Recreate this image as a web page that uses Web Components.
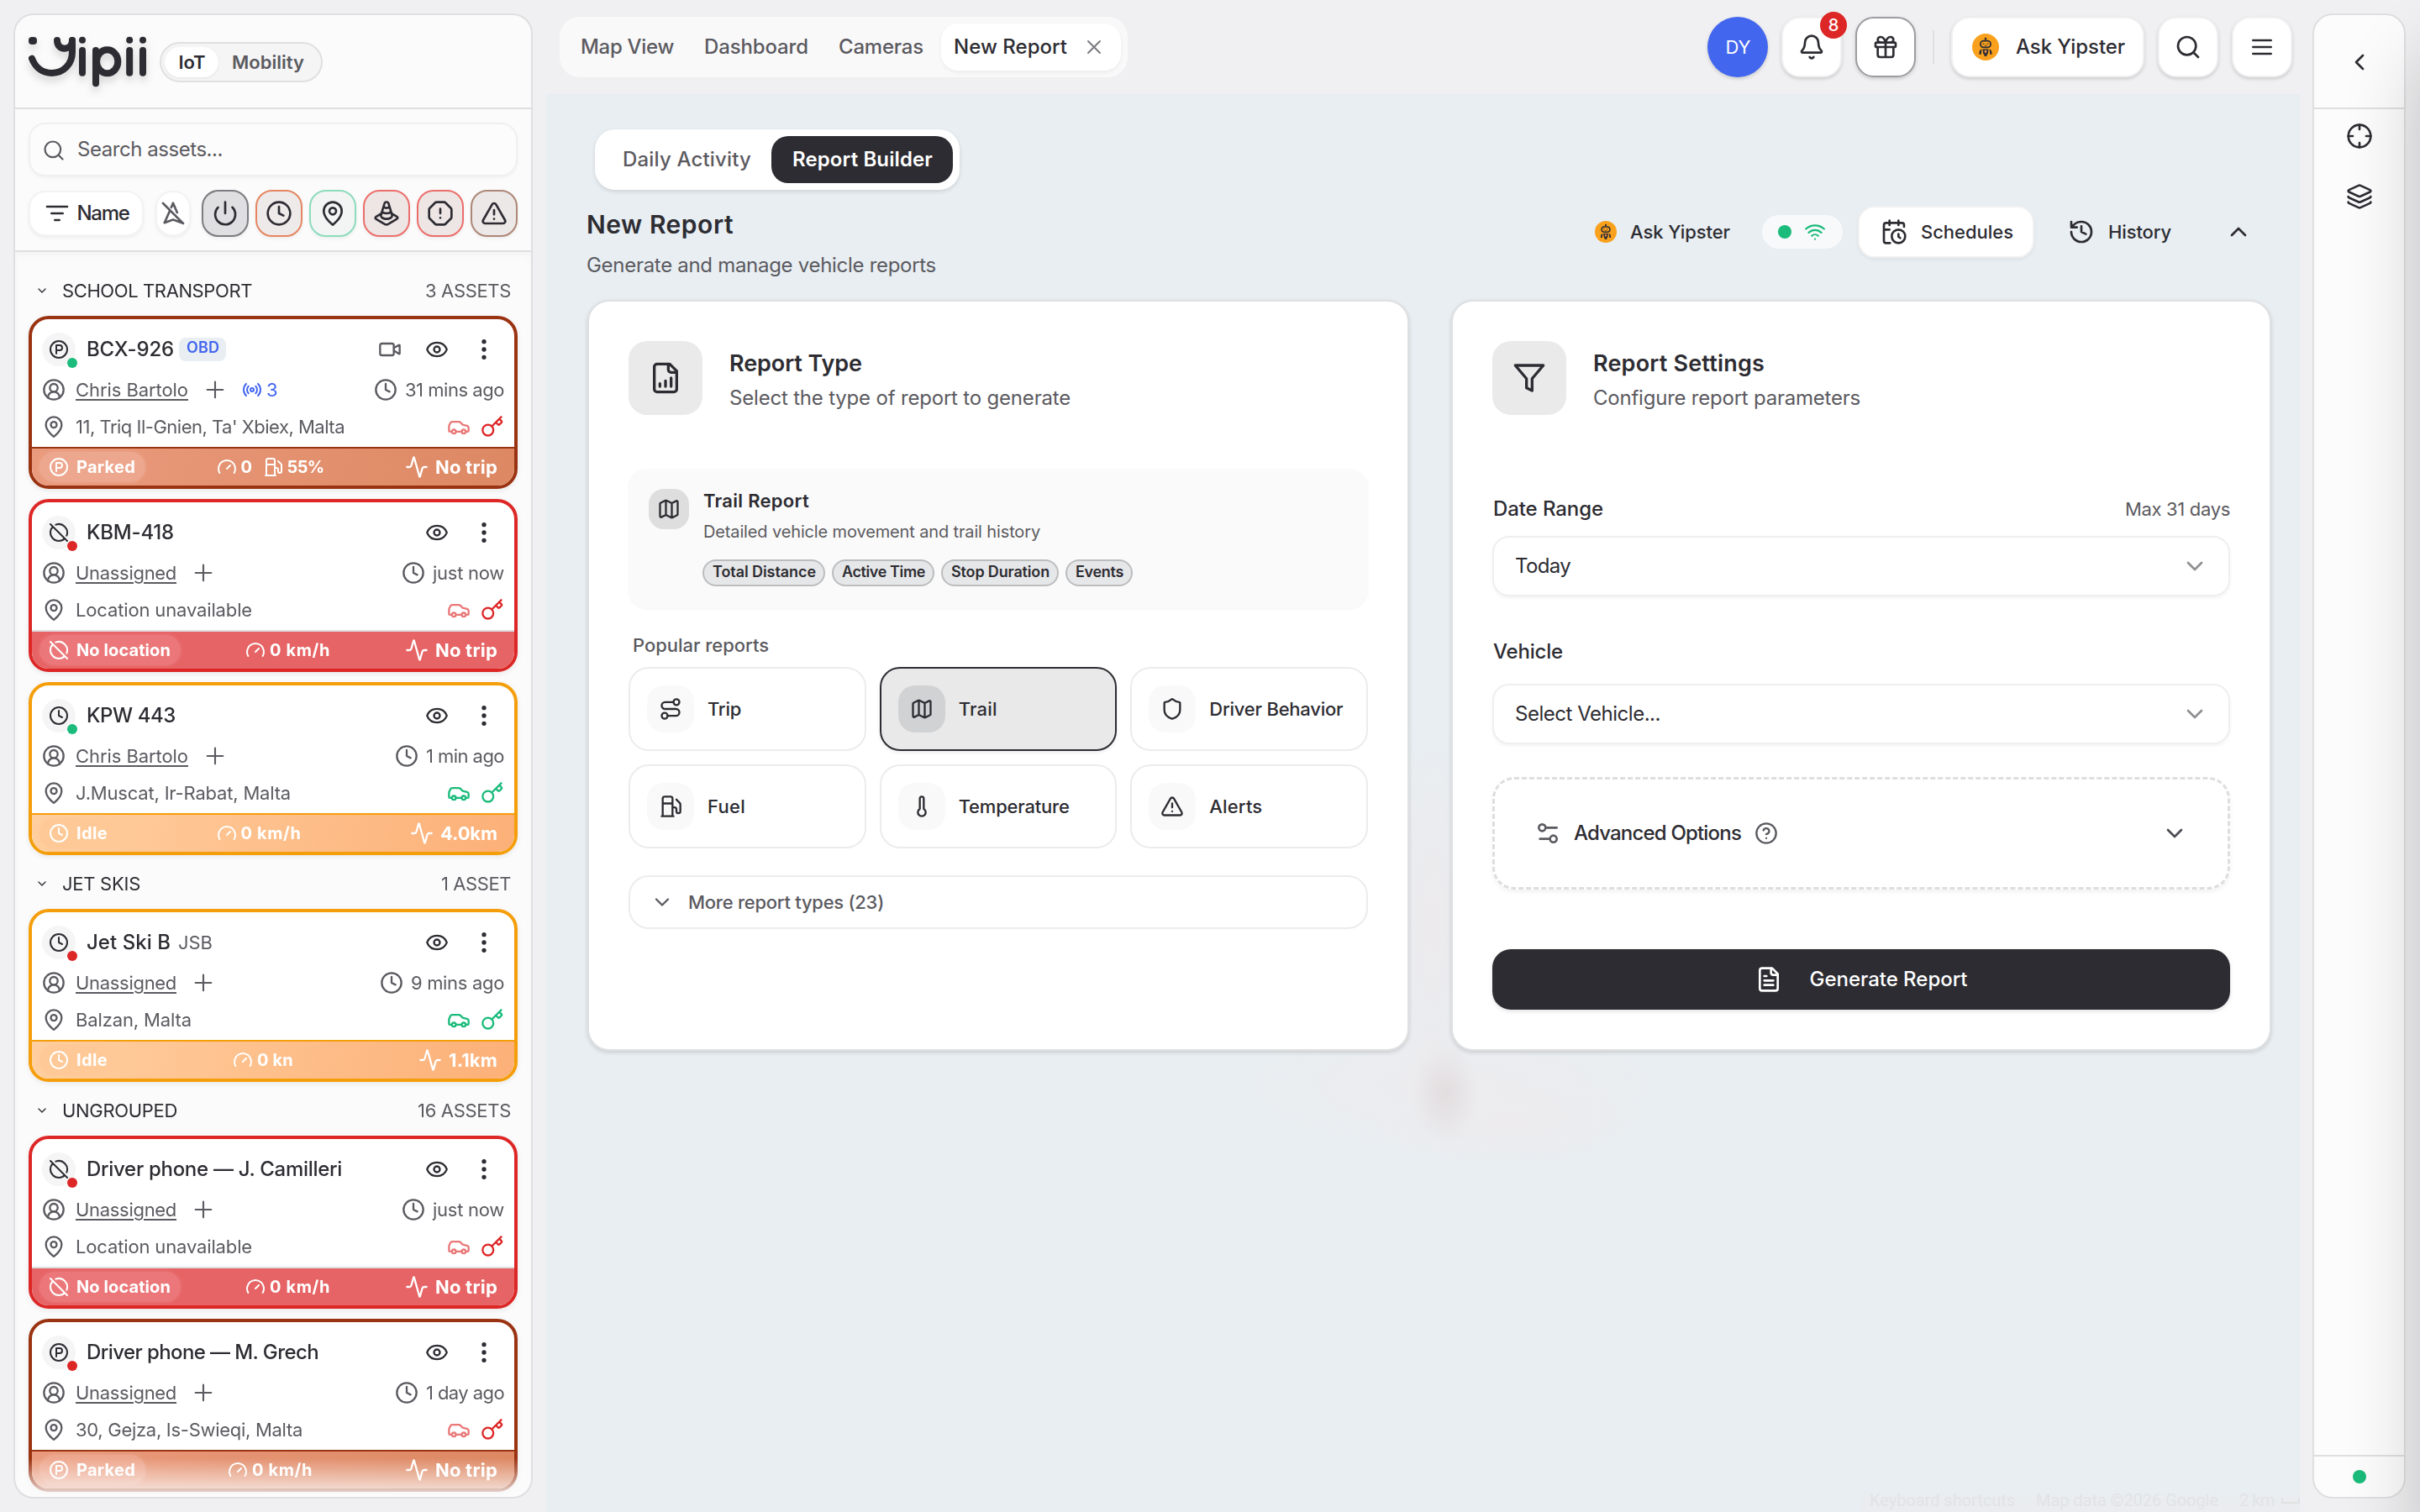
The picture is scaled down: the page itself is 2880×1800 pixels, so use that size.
<!DOCTYPE html>
<html lang="en">
<head>
  <meta charset="UTF-8">
  <meta name="viewport" content="width=device-width, initial-scale=1.0">
  <title>New Report</title>
  <style>
    html, body {
      margin: 0;
      height: 100%;
    }
    body {
      --ink: #2d2c32;
      --muted: #5b5a60;
      --line: #dfdfe1;
      --soft-line: #efeff0;
      --green: #1abb7b;
      --red: #dd2727;
      --blue: #4366ee;
      background: #f0f0f2;
      color: var(--ink);
      font-family: Inter, "Liberation Sans", sans-serif;
      font-size: 22px;
      line-height: 1;
      overflow: hidden;
    }
  </style>
</head>
<body>

  <fleet-app></fleet-app>

  <script>
    const ICONS = {
      search: '<circle cx="11" cy="11" r="8"/><path d="m21 21-4.3-4.3"/>',
      filter: '<path d="M3 6h18M7 12h10M10 18h4"/>',
      navOff: '<path d="M3 3l18 18M10.4 6.6 12 2.8l3.6 8.4M9.2 9.5 4.3 20.4 12 17.6l7.8 2.8"/>',
      power: '<path d="M12 2v10M18.4 6.6a9 9 0 1 1-12.77.04"/>',
      clock: '<circle cx="12" cy="12" r="10"/><path d="M12 6v6l4 2"/>',
      pin: '<path d="M20 10c0 4.993-5.539 10.193-7.399 11.799a1 1 0 0 1-1.202 0C9.539 20.193 4 14.993 4 10a8 8 0 0 1 16 0"/><circle cx="12" cy="10" r="3"/>',
      cone: '<path d="M9.3 6.2a4.55 4.55 0 0 0 5.4 0M7.9 10.7c.9.8 2.4 1.3 4.1 1.3s3.2-.5 4.1-1.3M13.9 3.5a1.93 1.93 0 0 0-3.8-.1l-3 10c-.1.2-.1.4-.1.6 0 1.7 2.2 3 5 3s5-1.3 5-3c0-.2 0-.4-.1-.5Z"/><path d="m7.5 12.2-4.7 2.7c-.5.3-.8.7-.8 1.1s.3.8.8 1.1l7.6 4.5c.9.5 2.1.5 3 0l7.6-4.5c.7-.3 1-.7 1-1.1s-.3-.8-.8-1.1l-4.7-2.8"/>',
      octagon: '<path d="M12 16h.01M12 8v4M15.312 2a2 2 0 0 1 1.414.586l4.688 4.688A2 2 0 0 1 22 8.688v6.624a2 2 0 0 1-.586 1.414l-4.688 4.688a2 2 0 0 1-1.414.586H8.688a2 2 0 0 1-1.414-.586l-4.688-4.688A2 2 0 0 1 2 15.312V8.688a2 2 0 0 1 .586-1.414l4.688-4.688A2 2 0 0 1 8.688 2z"/>',
      alert: '<path d="m21.73 18-8-14a2 2 0 0 0-3.48 0l-8 14A2 2 0 0 0 4 21h16a2 2 0 0 0 1.73-3M12 9v4M12 17h.01"/>',
      down: '<path d="m6 9 6 6 6-6"/>',
      up: '<path d="m18 15-6-6-6 6"/>',
      left: '<path d="m15 18-6-6 6-6"/>',
      parking: '<circle cx="12" cy="12" r="10"/><path d="M9 17V7h4a3 3 0 0 1 0 6H9"/>',
      circleOff: '<path d="m2 2 20 20M8.35 2.69A10 10 0 0 1 21.3 15.65M19.08 19.08A10 10 0 1 1 4.92 4.92"/>',
      video: '<path d="m16 13 5.223 3.482a.5.5 0 0 0 .777-.416V7.87a.5.5 0 0 0-.752-.432L16 10.5"/><rect x="2" y="6" width="14" height="12" rx="2"/>',
      eye: '<path d="M2.062 12.348a1 1 0 0 1 0-.696 10.75 10.75 0 0 1 19.876 0 1 1 0 0 1 0 .696 10.75 10.75 0 0 1-19.876 0"/><circle cx="12" cy="12" r="3"/>',
      dots: '<circle cx="12" cy="5" r="1"/><circle cx="12" cy="12" r="1"/><circle cx="12" cy="19" r="1"/>',
      user: '<path d="M18 20a6 6 0 0 0-12 0"/><circle cx="12" cy="10" r="4"/><circle cx="12" cy="12" r="10"/>',
      plus: '<path d="M5 12h14M12 5v14"/>',
      radio: '<path d="M16.247 7.761a6 6 0 0 1 0 8.478M19.075 4.933a10 10 0 0 1 0 14.134M4.925 19.067a10 10 0 0 1 0-14.134M7.753 16.239a6 6 0 0 1 0-8.478"/><circle cx="12" cy="12" r="2"/>',
      car: '<path d="M19 17h2c.6 0 1-.4 1-1v-3c0-.9-.7-1.7-1.5-1.9C18.7 10.6 16 10 16 10s-1.3-1.4-2.2-2.3c-.5-.4-1.1-.7-1.8-.7H5c-.6 0-1.1.4-1.4.9l-1.4 2.9A3.7 3.7 0 0 0 2 12v4c0 .6.4 1 1 1h2M9 17h6"/><circle cx="7" cy="17" r="2"/><circle cx="17" cy="17" r="2"/>',
      key: '<path d="m15.5 7.5 2.3 2.3a1 1 0 0 0 1.4 0l2.1-2.1a1 1 0 0 0 0-1.4L19 4M21 2l-9.6 9.6"/><circle cx="7.5" cy="15.5" r="5.5"/>',
      gauge: '<path d="m12 14 4-4M3.34 19a10 10 0 1 1 17.32 0"/>',
      fuel: '<path d="M3 22h12M4 9h10M14 22V4a2 2 0 0 0-2-2H6a2 2 0 0 0-2 2v18M14 13h2a2 2 0 0 1 2 2v2a2 2 0 0 0 4 0V9.83a2 2 0 0 0-.59-1.42L18 5"/>',
      activity: '<path d="M22 12h-2.48a2 2 0 0 0-1.93 1.46l-2.35 8.36a.25.25 0 0 1-.48 0L9.24 2.18a.25.25 0 0 0-.48 0l-2.35 8.36A2 2 0 0 1 4.49 12H2"/>',
      close: '<path d="M18 6 6 18M6 6l12 12"/>',
      bell: '<path d="M10.268 21a2 2 0 0 0 3.464 0M3.262 15.326A1 1 0 0 0 4 17h16a1 1 0 0 0 .74-1.673C19.41 13.956 18 12.499 18 8A6 6 0 0 0 6 8c0 4.499-1.411 5.956-2.738 7.326"/>',
      gift: '<rect x="3" y="8" width="18" height="4" rx="1"/><path d="M12 8v13M19 12v7a2 2 0 0 1-2 2H7a2 2 0 0 1-2-2v-7M7.5 8a2.5 2.5 0 0 1 0-5A4.8 8 0 0 1 12 8a4.8 8 0 0 1 4.5-5 2.5 2.5 0 0 1 0 5"/>',
      menu: '<path d="M4 6h16M4 12h16M4 18h16"/>',
      crosshair: '<circle cx="12" cy="12" r="10"/><path d="M22 12h-4M6 12H2M12 6V2M12 22v-4"/>',
      layers: '<path d="M12.83 2.18a2 2 0 0 0-1.66 0L2.6 6.08a1 1 0 0 0 0 1.83l8.58 3.91a2 2 0 0 0 1.66 0l8.58-3.9a1 1 0 0 0 0-1.83zM2 12a1 1 0 0 0 .58.91l8.6 3.91a2 2 0 0 0 1.65 0l8.58-3.9A1 1 0 0 0 22 12M2 17a1 1 0 0 0 .58.91l8.6 3.91a2 2 0 0 0 1.65 0l8.58-3.9A1 1 0 0 0 22 17"/>',
      wifi: '<path d="M12 20h.01M2 8.82a15 15 0 0 1 20 0M5 12.859a10 10 0 0 1 14 0M8.5 16.429a5 5 0 0 1 7 0"/>',
      schedule: '<path d="M21 7.5V6a2 2 0 0 0-2-2H5a2 2 0 0 0-2 2v14a2 2 0 0 0 2 2h3.5M16 2v4M8 2v4M3 10h5M17.5 17.5 16 16.3V14"/><circle cx="16" cy="16" r="6"/>',
      history: '<path d="M3 12a9 9 0 1 0 9-9 9.75 9.75 0 0 0-6.74 2.74L3 8M3 3v5h5M12 7v5l4 2"/>',
      fileChart: '<path d="M15 2H6a2 2 0 0 0-2 2v16a2 2 0 0 0 2 2h12a2 2 0 0 0 2-2V7ZM14 2v4a2 2 0 0 0 2 2h4M8 18v-2M12 18v-4M16 18v-6"/>',
      fileText: '<path d="M15 2H6a2 2 0 0 0-2 2v16a2 2 0 0 0 2 2h12a2 2 0 0 0 2-2V7ZM14 2v4a2 2 0 0 0 2 2h4M10 9H8M16 13H8M16 17H8"/>',
      map: '<path d="M14.106 5.553a2 2 0 0 0 1.788 0l3.659-1.83A1 1 0 0 1 21 4.619v12.764a1 1 0 0 1-.553.894l-4.553 2.277a2 2 0 0 1-1.788 0l-4.212-2.106a2 2 0 0 0-1.788 0l-3.659 1.83A1 1 0 0 1 3 19.381V6.618a1 1 0 0 1 .553-.894l4.553-2.277a2 2 0 0 1 1.788 0zM15 5.764v15M9 3.236v15"/>',
      route: '<circle cx="6" cy="19" r="3"/><path d="M9 19h8.5a3.5 3.5 0 0 0 0-7h-11a3.5 3.5 0 0 1 0-7H15"/><circle cx="18" cy="5" r="3"/>',
      shield: '<path d="M20 13c0 5-3.5 7.5-7.66 8.95a1 1 0 0 1-.67-.01C7.5 20.5 4 18 4 13V6a1 1 0 0 1 1-1c2 0 4.5-1.2 6.24-2.72a1.17 1.17 0 0 1 1.52 0C14.51 3.81 17 5 19 5a1 1 0 0 1 1 1z"/>',
      thermometer: '<path d="M14 4v10.54a4 4 0 1 1-4 0V4a2 2 0 0 1 4 0Z"/>',
      funnel: '<path d="M22 3H2l8 9.46V19l4 2v-8.54z"/>',
      sliders: '<path d="M20 7h-9M14 17H5"/><circle cx="17" cy="17" r="3"/><circle cx="7" cy="7" r="3"/>',
      help: '<circle cx="12" cy="12" r="10"/><path d="M9.09 9a3 3 0 0 1 5.83 1c0 2-3 3-3 3M12 17h.01"/>'
    };

    class FleetIcon extends HTMLElement {
      constructor() {
        super();
        this.attachShadow({ mode: 'open' });
      }

      connectedCallback() {
        const size = this.getAttribute('size') || 32;
        const stroke = this.getAttribute('stroke') || 2;
        this.shadowRoot.innerHTML = `
          <style>
            :host { display: block; flex: none; width: ${size}px; height: ${size}px; }
            svg { display: block; }
          </style>
          <svg width="${size}" height="${size}" viewBox="0 0 24 24" fill="none" stroke="currentColor"
            stroke-width="${stroke}" stroke-linecap="round" stroke-linejoin="round">${ICONS[this.getAttribute('name')]}</svg>
        `;
      }
    }
    customElements.define('fleet-icon', FleetIcon);

    // Single-line label that tracks its letters to fill the width in "w"
    class FitText extends HTMLElement {
      static all = [];

      constructor() {
        super();
        this.attachShadow({ mode: 'open' });
        this.shadowRoot.innerHTML = `
          <style>
            :host { display: block; flex: none; white-space: nowrap; }
            span { display: inline-block; margin-left: 1px; }
            :host([underline]) span {
              text-decoration: underline;
              text-decoration-thickness: 2px;
              text-underline-offset: 3px;
              text-decoration-skip-ink: auto;
            }
          </style>
          <span><slot></slot></span>
        `;
        FitText.all.push(this);
      }

      fit() {
        const width = Number(this.getAttribute('w'));
        if (!width || !this.isConnected) return;
        const span = this.shadowRoot.querySelector('span');
        const spacing = (width - 1 - span.getBoundingClientRect().width) / this.textContent.length;
        span.style.letterSpacing = spacing.toFixed(3) + 'px';
        this.style.width = width + 'px';
      }
    }
    customElements.define('fit-text', FitText);

    class FleetLogo extends HTMLElement {
      constructor() {
        super();
        this.attachShadow({ mode: 'open' });
        this.shadowRoot.innerHTML = `
          <style>
            :host { display: block; flex: none; }
            svg { display: block; overflow: visible; filter: drop-shadow(0 6px 5px rgba(45, 44, 50, .18)); }
          </style>
          <svg width="150" height="66" viewBox="30 60 450 198" fill="none" stroke="#2d2c32" stroke-width="24" stroke-linecap="round" stroke-linejoin="round">
            <rect x="42" y="72" width="30" height="27" rx="12" fill="#2d2c32" stroke="none"/>
            <path d="M54 149c12 32 38 52 71 52 42 0 73-32 73-76V84"/>
            <path d="M144 84c0 18 10 29 27 29 16 0 27-11 27-29"/>
            <path d="M234 83.500v0M234 120v80M402.500 83.500v0M402.500 120v80M450 83.500v0M450 120v80M282 120v118"/>
            <ellipse cx="323" cy="160" rx="38" ry="42"/>
          </svg>
        `;
      }
    }
    customElements.define('fleet-logo', FleetLogo);

    class YipsterAvatar extends HTMLElement {
      constructor() {
        super();
        this.attachShadow({ mode: 'open' });
      }

      connectedCallback() {
        const size = this.getAttribute('size') || 32;
        this.shadowRoot.innerHTML = `
          <style>
            :host { display: block; flex: none; }
            svg { display: block; }
          </style>
          <svg width="${size}" height="${size}" viewBox="0 0 32 32">
            <circle cx="16" cy="16" r="16" fill="#f9a11d"/>
            <g fill="#2d2c32">
              <circle cx="16" cy="6" r="1.300"/>
              <rect x="15.500" y="6" width="1" height="3"/>
              <rect x="9" y="7.800" width="14" height="9.500" rx="4.700"/>
              <path d="M12.500 18.500h7l-.6 5.500-1.400 1.200v1.800h-3v-1.800l-1.400-1.200z"/>
              <path d="M11.500 18.500c-2.500.5-3.200 3.200-3 6.200h2.200zM20.500 18.500c2.500.5 3.200 3.200 3 6.200h-2.200z"/>
            </g>
            <rect x="10.800" y="9.600" width="10.400" height="5.900" rx="2.900" fill="#f9a11d"/>
            <path d="M12.500 12.300h2M17.500 12.300h2M15 14.300h2" stroke="#2d2c32" stroke-width="1"/>
            <path d="M16 23.500c-2-1.500-2-3.700 0-3.700s2 2.200 0 3.700" fill="#e98a4a"/>
          </svg>
        `;
      }
    }
    customElements.define('yipster-avatar', YipsterAvatar);

    const STATUS = {
      parked: { icon: 'parking', border: '#9a3312', rule: '#9a3312', fill: 'linear-gradient(100deg, #ea9b7d, #dd8863)', pill: '#eda78e' },
      lost: { icon: 'circleOff', border: '#dd2727', rule: '#dedee1', fill: '#e66465', pill: '#eb777a' },
      idle: { icon: 'clock', border: '#f59e0b', rule: '#f59e0b', fill: 'linear-gradient(100deg, #ffcf9f, #fcb078)', pill: '#fec997' }
    };

    class AssetCard extends HTMLElement {
      constructor() {
        super();
        this.attachShadow({ mode: 'open' });
      }

      set asset(a) {
        const s = STATUS[a.status];
        const text = ([label, w]) => `<fit-text w="${w}">${label}</fit-text>`;
        this.shadowRoot.innerHTML = `
          <style>
            :host {
              display: block;
              box-sizing: border-box;
              height: 206px;
              padding-top: 16px;
              border: 4px solid ${s.border};
              border-radius: 24px;
              background: #fff;
              overflow: hidden;
              box-shadow: 0 2px 6px rgba(0, 0, 0, .08);
              color: var(--muted);
            }
            div { display: flex; align-items: center; }
            .row { height: 40px; padding: 0 12px; }
            .head { padding-right: 20px; margin-bottom: 8px; color: var(--ink); }
            .status {
              position: relative;
              width: 40px;
              height: 40px;
              margin-right: 12px;
              justify-content: center;
              border-radius: 50%;
              background: #f5f5f6;
            }
            .status i {
              position: absolute;
              right: -2px;
              bottom: -2px;
              width: 12px;
              height: 12px;
              border-radius: 50%;
              background: ${a.online ? 'var(--green)' : 'var(--red)'};
            }
            .name { font-size: 24px; font-weight: 500; }
            .alias { margin-left: 8px; color: var(--muted); }
            .badge {
              width: 56px;
              height: 28px;
              margin-left: 6px;
              justify-content: center;
              border-radius: 8px;
              background: #e9eef3;
              color: var(--blue);
              font-size: 18px;
              font-weight: 600;
            }
            .badge fit-text { margin-top: -4px; }
            .push { margin-left: auto; }
            .video { margin-right: 28px; color: var(--muted); }
            .eye { margin-right: 26px; }
            .driver { margin-left: 11px; }
            .plus { margin-left: 16px; }
            .tags { margin-left: 16px; gap: 4px; color: var(--blue); }
            .time { gap: 8px; }
            .place { margin: 4px 0; }
            .place .label { margin-left: 11px; }
            .flags { gap: 12px; color: ${a.ignition ? 'var(--green)' : 'var(--red)'}; }
            .flags .car { opacity: ${a.ignition ? 1 : .62}; }
            footer {
              box-sizing: border-box;
              display: flex;
              height: 46px;
              padding: 0 20px 0 9px;
              align-items: center;
              justify-content: space-between;
              border-top: 2px solid ${s.rule};
              background: ${s.fill};
              color: #fff;
              font-weight: 700;
            }
            .pill {
              height: 36px;
              padding: 0 12px 0 11px;
              gap: 8px;
              border-radius: 18px;
              background: ${s.pill};
              box-shadow: 0 0 5px ${s.pill};
              font-size: 20px;
            }
            .stats { gap: 4px; padding-right: 12px; font-size: 20px; }
            .stats .fuel { margin-left: 8px; }
            .trip { gap: 7px; }
          </style>
          <div class="row head">
            <div class="status"><fleet-icon name="${s.icon}" size="24"></fleet-icon><i></i></div>
            <fit-text class="name" w="${a.name[1]}">${a.name[0]}</fit-text>
            ${a.alias ? `<fit-text class="alias" w="42">${a.alias}</fit-text>` : ''}
            ${a.badge ? `<div class="badge"><fit-text w="40">${a.badge}</fit-text></div>` : ''}
            <div class="push">
              ${a.camera ? '<fleet-icon class="video" name="video" size="28"></fleet-icon>' : ''}
              <fleet-icon class="eye" name="eye" size="28"></fleet-icon>
              <fleet-icon name="dots"></fleet-icon>
            </div>
          </div>
          <div class="row">
            <fleet-icon name="user" size="28"></fleet-icon>
            <fit-text class="driver" underline w="${a.driver[1]}">${a.driver[0]}</fit-text>
            <fleet-icon class="plus" name="plus" stroke="1.6"></fleet-icon>
            ${a.tags ? `<div class="tags"><fleet-icon name="radio" size="24"></fleet-icon><fit-text w="13">${a.tags}</fit-text></div>` : ''}
            <div class="push time"><fleet-icon name="clock" size="28"></fleet-icon>${text(a.time)}</div>
          </div>
          <div class="row place">
            <fleet-icon name="pin" size="28"></fleet-icon>
            <fit-text class="label" w="${a.place[1]}">${a.place[0]}</fit-text>
            <div class="push flags"><fleet-icon class="car" name="car" size="28"></fleet-icon><fleet-icon name="key" size="28"></fleet-icon></div>
          </div>
          <footer>
            <div class="pill"><fleet-icon name="${s.icon}" size="24"></fleet-icon>${text(a.state)}</div>
            <div class="stats">
              <fleet-icon name="gauge" size="24"></fleet-icon>${text(a.speed)}
              ${a.fuel ? `<fleet-icon class="fuel" name="fuel" size="24"></fleet-icon>${text(a.fuel)}` : ''}
            </div>
            <div class="trip"><fleet-icon name="activity" size="28"></fleet-icon>${text(a.trip)}</div>
          </footer>
        `;
      }
    }
    customElements.define('asset-card', AssetCard);

    class AssetGroup extends HTMLElement {
      constructor() {
        super();
        this.attachShadow({ mode: 'open' });
      }

      set group(g) {
        this.shadowRoot.innerHTML = `
          <style>
            :host { display: block; }
            header {
              box-sizing: border-box;
              display: flex;
              align-items: center;
              height: 64px;
              padding: 4px 8px 0 8px;
            }
            .title { margin-left: 15px; }
            .count { margin-left: auto; color: var(--muted); }
            .cards { display: grid; gap: 12px; }
          </style>
          <header>
            <fleet-icon name="down" size="16"></fleet-icon>
            <fit-text class="title" w="${g.title[1]}">${g.title[0]}</fit-text>
            <fit-text class="count" w="${g.count[1]}">${g.count[0]}</fit-text>
          </header>
          <div class="cards"></div>
        `;
        g.assets.forEach(asset => {
          const card = document.createElement('asset-card');
          card.asset = asset;
          this.shadowRoot.querySelector('.cards').append(card);
        });
      }
    }
    customElements.define('asset-group', AssetGroup);

    const GROUPS = [
      {
        title: ['SCHOOL TRANSPORT', 227], count: ['3 ASSETS', 103], assets: [
          { status: 'parked', online: true, name: ['BCX-926', 105], badge: 'OBD', camera: true, tags: '3', driver: ['Chris Bartolo', 135], time: ['31 mins ago', 119], place: ["11, Triq Il-Gnien, Ta' Xbiex, Malta", 321], state: ['Parked', 71], speed: ['0', 15], fuel: ['55%', 45], trip: ['No trip', 75] },
          { status: 'lost', name: ['KBM-418', 105], driver: ['Unassigned', 121], time: ['just now', 86], place: ['Location unavailable', 211], state: ['No location', 113], speed: ['0 km/h', 73], trip: ['No trip', 75] },
          { status: 'idle', online: true, ignition: true, name: ['KPW 443', 107], driver: ['Chris Bartolo', 135], time: ['1 min ago', 94], place: ['J.Muscat, Ir-Rabat, Malta', 257], state: ['Idle', 38], speed: ['0 km/h', 73], trip: ['4.0km', 69] }
        ]
      },
      {
        title: ['JET SKIS', 94], count: ['1 ASSET', 84], assets: [
          { status: 'idle', ignition: true, name: ['Jet Ski B', 101], alias: 'JSB', driver: ['Unassigned', 121], time: ['9 mins ago', 112], place: ['Balzan, Malta', 139], state: ['Idle', 38], speed: ['0 kn', 44], trip: ['1.1km', 59] }
        ]
      },
      {
        title: ['UNGROUPED', 138], count: ['16 ASSETS', 112], assets: [
          { status: 'lost', name: ['Driver phone — J. Camilleri', 305], driver: ['Unassigned', 121], time: ['just now', 86], place: ['Location unavailable', 211], state: ['No location', 113], speed: ['0 km/h', 73], trip: ['No trip', 75] },
          { status: 'parked', name: ['Driver phone — M. Grech', 277], driver: ['Unassigned', 121], time: ['1 day ago', 94], place: ['30, Gejza, Is-Swieqi, Malta', 271], state: ['Parked', 71], speed: ['0 km/h', 73], trip: ['No trip', 75] }
        ]
      }
    ];

    const FILTERS = [
      ['power', '#7c7c81', '#dfdfe1'],
      ['clock', '#e68661', '#eeeaea'],
      ['pin', '#8ddcbd', '#f3f5f4'],
      ['cone', '#ec6e6b', '#eee6e5'],
      ['octagon', '#ec6e6b', '#eee6e5'],
      ['alert', '#ad8777', '#ece8e8']
    ];

    class AssetSidebar extends HTMLElement {
      constructor() {
        super();
        this.attachShadow({ mode: 'open' });
        this.shadowRoot.innerHTML = `
          <style>
            :host {
              box-sizing: border-box;
              display: flex;
              flex-direction: column;
              width: 618px;
              height: 1768px;
              margin: 16px;
              border: 2px solid var(--line);
              border-radius: 24px;
              background: #fbfbfb;
              overflow: hidden;
            }
            header {
              box-sizing: border-box;
              display: flex;
              height: 112px;
              padding: 22px 0 0 12px;
              border-bottom: 2px solid var(--line);
            }
            .switch {
              box-sizing: border-box;
              display: flex;
              align-items: center;
              width: 194px;
              height: 48px;
              margin: 10px 0 0 10px;
              padding: 0 4px;
              border: 2px solid #e0e0e2;
              border-radius: 24px;
              background: #f5f5f6;
              color: var(--muted);
              font-weight: 600;
            }
            .switch .on {
              display: flex;
              align-items: center;
              justify-content: center;
              width: 64px;
              height: 36px;
              margin-right: 15px;
              border-radius: 18px;
              background: #fff;
              box-shadow: 0 1px 3px rgba(0, 0, 0, .08);
              color: var(--ink);
            }
            .tools {
              box-sizing: border-box;
              height: 170px;
              padding: 16px 16px 0;
              border-bottom: 2px solid var(--line);
              flex: none;
            }
            .search {
              box-sizing: border-box;
              display: flex;
              align-items: center;
              gap: 13px;
              height: 64px;
              padding: 0 14px;
              border: 2px solid #f0f0f1;
              border-radius: 20px;
              background: #fcfcfc;
              box-shadow: 0 2px 4px rgba(0, 0, 0, .04);
              color: var(--muted);
              font-size: 24px;
            }
            .search fleet-icon { margin-top: 2px; }
            .filters { display: flex; align-items: center; height: 56px; margin-top: 16px; }
            .filters div {
              box-sizing: border-box;
              display: flex;
              align-items: center;
              justify-content: center;
              border-radius: 20px;
              box-shadow: 0 2px 4px rgba(0, 0, 0, .06);
            }
            .filters .sort, .filters .nav { height: 54px; border: 2px solid #f3f3f4; background: #fff; }
            .filters .sort { width: 137px; gap: 7px; font-size: 24px; font-weight: 500; }
            .filters .nav { width: 42px; margin: 0 13px 0 14px; color: var(--muted); }
            .filters .chip { width: 56px; height: 56px; margin-right: 8px; border: 2px solid; }
            .filters .chip:last-child { margin-right: 0; }
            .list {
              flex: 1;
              min-height: 0;
              padding: 12px 16px 0;
              box-shadow: inset 0 4px 8px rgba(0, 0, 0, .03);
              -webkit-mask-image: linear-gradient(#000 1436px, rgba(0, 0, 0, .28) 1474px, transparent 1484px);
              mask-image: linear-gradient(#000 1436px, rgba(0, 0, 0, .28) 1474px, transparent 1484px);
            }
          </style>
          <header>
            <fleet-logo></fleet-logo>
            <div class="switch">
              <div class="on"><fit-text w="33">IoT</fit-text></div>
              <fit-text w="87">Mobility</fit-text>
            </div>
          </header>
          <section class="tools">
            <div class="search"><fleet-icon name="search" size="28" stroke="1.900"></fleet-icon><fit-text w="174">Search assets...</fit-text></div>
            <div class="filters">
              <div class="sort"><fleet-icon name="filter"></fleet-icon><fit-text w="63">Name</fit-text></div>
              <div class="nav"><fleet-icon name="navOff"></fleet-icon></div>
              ${FILTERS.map(([icon, line, fill]) => `<div class="chip" style="border-color: ${line}; background: ${fill}"><fleet-icon name="${icon}"></fleet-icon></div>`).join('')}
            </div>
          </section>
          <section class="list"></section>
        `;
        GROUPS.forEach(group => {
          const el = document.createElement('asset-group');
          el.group = group;
          this.shadowRoot.querySelector('.list').append(el);
        });
      }
    }
    customElements.define('asset-sidebar', AssetSidebar);

    class TopBar extends HTMLElement {
      constructor() {
        super();
        this.attachShadow({ mode: 'open' });
        this.shadowRoot.innerHTML = `
          <style>
            :host {
              box-sizing: border-box;
              display: flex;
              justify-content: space-between;
              height: 112px;
              padding: 20px 9px 0 16px;
              font-size: 24px;
            }
            nav, .tab, .actions, .button { display: flex; align-items: center; }
            nav {
              box-sizing: border-box;
              width: 676px;
              height: 72px;
              padding-left: 24px;
              border-radius: 24px;
              background: #f9f9fa;
              color: var(--muted);
              font-weight: 450;
            }
            nav > fit-text { margin-right: 35px; }
            .tab {
              height: 56px;
              width: 214px;
              margin-left: -14px;
              border-radius: 20px;
              background: #fff;
              box-shadow: 0 2px 5px rgba(0, 0, 0, .06);
              color: var(--ink);
              font-weight: 500;
            }
            .tab fit-text { margin: 0 18px 0 14px; }
            .tab fleet-icon { color: #77777c; }
            .actions { gap: 16px; height: 72px; }
            .button {
              box-sizing: border-box;
              position: relative;
              justify-content: center;
              width: 72px;
              height: 72px;
              border: 2px solid #f1f1f2;
              border-radius: 22px;
              background: #fff;
              box-shadow: 0 2px 4px rgba(0, 0, 0, .16);
            }
            .avatar { border: 0; border-radius: 50%; background: var(--blue); color: #fff; font-size: 22px; }
            .gift { border-color: #9d9da1; }
            .badge {
              position: absolute;
              right: -8px;
              top: -8px;
              width: 32px;
              height: 32px;
              border-radius: 50%;
              background: var(--red);
              color: #fff;
              font-size: 20px;
              font-weight: 500;
              line-height: 32px;
              text-align: center;
            }
            hr { width: 2px; height: 40px; margin: 0 4px; border: 0; background: #e0e0e3; }
            .ask { width: 230px; gap: 19px; padding-left: 2px; font-weight: 500; }
          </style>
          <nav>
            <fit-text w="112">Map View</fit-text>
            <fit-text w="125">Dashboard</fit-text>
            <fit-text w="102">Cameras</fit-text>
            <div class="tab"><fit-text w="136">New Report</fit-text><fleet-icon name="close" size="28" stroke="1.600"></fleet-icon></div>
          </nav>
          <div class="actions">
            <div class="button avatar"><fit-text w="31">DY</fit-text></div>
            <div class="button"><fleet-icon name="bell"></fleet-icon><span class="badge">8</span></div>
            <div class="button gift"><fleet-icon name="gift"></fleet-icon></div>
            <hr>
            <div class="button ask"><yipster-avatar></yipster-avatar><fit-text w="131">Ask Yipster</fit-text></div>
            <div class="button"><fleet-icon name="search"></fleet-icon></div>
            <div class="button"><fleet-icon name="menu"></fleet-icon></div>
          </div>
        `;
      }
    }
    customElements.define('top-bar', TopBar);

    class ReportHeader extends HTMLElement {
      constructor() {
        super();
        this.attachShadow({ mode: 'open' });
        this.shadowRoot.innerHTML = `
          <style>
            :host { display: block; height: 245px; padding-top: 42px; box-sizing: border-box; }
            div { display: flex; align-items: center; box-sizing: border-box; }
            .tabs {
              width: 434px;
              height: 72px;
              margin-left: 9px;
              padding-left: 32px;
              border-radius: 24px;
              background: #fff;
              box-shadow: 0 2px 5px rgba(0, 0, 0, .12);
              color: var(--muted);
              font-size: 24px;
              font-weight: 500;
            }
            .tabs .on {
              justify-content: center;
              width: 216px;
              height: 56px;
              margin-left: 24px;
              border-radius: 20px;
              background: var(--ink);
              color: #fff;
              font-weight: 600;
            }
            .bar { align-items: flex-start; justify-content: space-between; margin-top: 20px; }
            section { margin-left: -2px; }
            h1 { margin: 6px 0 0; font-size: 30px; font-weight: 600; }
            p { margin: 22px 0 0; color: var(--muted); font-size: 24px; }
            .actions { height: 60px; padding-right: 23px; font-weight: 500; }
            .net { width: 96px; height: 40px; margin: 0 18px 0 38px; padding-left: 19px; gap: 15px; border-radius: 20px; background: #f8f9fa; color: var(--green); }
            .net i { width: 16px; height: 16px; border-radius: 50%; background: var(--green); }
            .schedules {
              width: 210px;
              height: 62px;
              padding-left: 25px;
              gap: 15px;
              border: 2px solid #f1f1f2;
              border-radius: 20px;
              background: #fff;
              box-shadow: 0 2px 4px rgba(0, 0, 0, .06);
            }
            .history { gap: 15px; margin: 0 64px 0 40px; }
          </style>
          <div class="tabs">
            <fit-text w="154">Daily Activity</fit-text>
            <div class="on"><fit-text w="168">Report Builder</fit-text></div>
          </div>
          <div class="bar">
            <section>
              <h1><fit-text w="176">New Report</fit-text></h1>
              <p><fit-text w="417">Generate and manage vehicle reports</fit-text></p>
            </section>
            <div class="actions">
              <yipster-avatar size="26"></yipster-avatar>
              <fit-text style="margin-left: 15px" w="120">Ask Yipster</fit-text>
              <div class="net"><i></i><fleet-icon name="wifi" size="26"></fleet-icon></div>
              <div class="schedules"><fleet-icon name="schedule"></fleet-icon><fit-text w="111">Schedules</fit-text></div>
              <div class="history"><fleet-icon name="history"></fleet-icon><fit-text w="76">History</fit-text></div>
              <fleet-icon name="up"></fleet-icon>
            </div>
          </div>
        `;
      }
    }
    customElements.define('report-header', ReportHeader);

    class ReportCard extends HTMLElement {
      constructor() {
        super();
        this.attachShadow({ mode: 'open' });
      }

      connectedCallback() {
        this.shadowRoot.innerHTML = `
          <style>
            :host {
              box-sizing: border-box;
              display: block;
              height: 894px;
              padding: 47px;
              border: 2px solid #dfe0e2;
              border-radius: 26px;
              background: #fff;
              box-shadow: 0 2px 5px rgba(0, 0, 0, .14);
            }
            header { display: flex; align-items: center; height: 88px; }
            .tile {
              display: grid;
              place-items: center;
              width: 88px;
              height: 88px;
              margin-right: 31px;
              border-radius: 22px;
              background: #ebeaeb;
            }
            h2 { margin: 4px 0 16px; font-size: 27px; font-weight: 600; }
            p { margin: 0; color: var(--muted); font-size: 24px; }
          </style>
          <header>
            <div class="tile"><fleet-icon name="${this.getAttribute('icon')}" size="40"></fleet-icon></div>
            <section>
              <h2><fit-text w="${this.getAttribute('title-w')}">${this.getAttribute('heading')}</fit-text></h2>
              <p><fit-text w="${this.getAttribute('sub-w')}">${this.getAttribute('sub')}</fit-text></p>
            </section>
          </header>
          <slot></slot>
        `;
      }
    }
    customElements.define('report-card', ReportCard);

    class TrailSummary extends HTMLElement {
      constructor() {
        super();
        this.attachShadow({ mode: 'open' });
        this.shadowRoot.innerHTML = `
          <style>
            :host {
              box-sizing: border-box;
              display: flex;
              height: 166px;
              margin-top: 64px;
              padding: 24px;
              border-radius: 22px;
              background: #fafafa;
              box-shadow: 0 1px 3px rgba(0, 0, 0, .05);
            }
            .tile {
              display: grid;
              place-items: center;
              width: 48px;
              height: 48px;
              margin-right: 16px;
              border-radius: 18px;
              background: #dededf;
            }
            .title { margin-top: 3px; font-weight: 600; }
            .text { margin-top: 16px; color: var(--muted); font-size: 20px; }
            .chips { display: flex; gap: 8px; margin-top: 23px; font-size: 18px; font-weight: 600; }
            .chips fit-text {
              padding: 4px 9px 6px;
              border: 2px solid #bcbdbe;
              border-radius: 16px;
              background: #e6e7e8;
            }
          </style>
          <div class="tile"><fleet-icon name="map" size="28"></fleet-icon></div>
          <section>
            <fit-text class="title" w="127">Trail Report</fit-text>
            <fit-text class="text" w="402">Detailed vehicle movement and trail history</fit-text>
            <div class="chips">
              <fit-text w="124">Total Distance</fit-text>
              <fit-text w="100">Active Time</fit-text>
              <fit-text w="118">Stop Duration</fit-text>
              <fit-text w="58">Events</fit-text>
            </div>
          </section>
        `;
      }
    }
    customElements.define('trail-summary', TrailSummary);

    class ReportTile extends HTMLElement {
      constructor() {
        super();
        this.attachShadow({ mode: 'open' });
      }

      connectedCallback() {
        this.shadowRoot.innerHTML = `
          <style>
            :host {
              box-sizing: border-box;
              display: flex;
              align-items: center;
              height: 100px;
              padding-left: 20px;
              border: 2px solid #ececed;
              border-radius: 24px;
              font-weight: 500;
            }
            :host([selected]) { border-color: var(--ink); background: #eae9ea; box-shadow: 0 2px 4px rgba(0, 0, 0, .08); }
            .tile {
              display: grid;
              place-items: center;
              width: 56px;
              height: 56px;
              margin-right: 15px;
              border-radius: 20px;
              background: #f9f9f9;
            }
            :host([selected]) .tile { background: #d1d2d3; }
          </style>
          <div class="tile"><fleet-icon name="${this.getAttribute('icon')}" size="28"></fleet-icon></div>
          <slot></slot>
        `;
      }
    }
    customElements.define('report-tile', ReportTile);

    class ReportTypes extends HTMLElement {
      constructor() {
        super();
        this.attachShadow({ mode: 'open' });
        this.shadowRoot.innerHTML = `
          <style>
            :host { display: block; }
            .caption { margin: 33px 0 15px 4px; color: var(--muted); font-weight: 450; }
            .grid { display: grid; grid-template-columns: repeat(3, 1fr); gap: 16px; }
            .more {
              box-sizing: border-box;
              display: flex;
              align-items: center;
              gap: 16px;
              height: 64px;
              margin-top: 32px;
              padding-left: 24px;
              border: 2px solid #ececed;
              border-radius: 24px;
              color: var(--muted);
              font-weight: 500;
            }
          </style>
          <fit-text class="caption" w="163">Popular reports</fit-text>
          <div class="grid">
            <report-tile icon="route"><fit-text w="41">Trip</fit-text></report-tile>
            <report-tile icon="map" selected><fit-text w="47">Trail</fit-text></report-tile>
            <report-tile icon="shield"><fit-text w="160">Driver Behavior</fit-text></report-tile>
            <report-tile icon="fuel"><fit-text w="46">Fuel</fit-text></report-tile>
            <report-tile icon="thermometer"><fit-text w="133">Temperature</fit-text></report-tile>
            <report-tile icon="alert"><fit-text w="64">Alerts</fit-text></report-tile>
          </div>
          <div class="more"><fleet-icon name="down" size="28"></fleet-icon><fit-text w="234">More report types (23)</fit-text></div>
        `;
      }
    }
    customElements.define('report-types', ReportTypes);

    class SelectField extends HTMLElement {
      constructor() {
        super();
        this.attachShadow({ mode: 'open' });
        this.shadowRoot.innerHTML = `
          <style>
            :host { display: block; font-size: 24px; }
            .label { display: flex; align-items: center; justify-content: space-between; height: 24px; font-weight: 500; }
            ::slotted([slot=note]) { color: var(--muted); font-size: 22px; font-weight: 400; }
            .box {
              box-sizing: border-box;
              display: flex;
              align-items: center;
              justify-content: space-between;
              height: 72px;
              margin-top: var(--field-gap, 20px);
              padding: 0 24px;
              border: 2px solid var(--soft-line);
              border-radius: 20px;
              background: #fff;
              box-shadow: 0 2px 4px rgba(0, 0, 0, .05);
            }
            .box fleet-icon { color: #8f8f93; }
          </style>
          <div class="label"><slot name="label"></slot><slot name="note"></slot></div>
          <div class="box"><slot></slot><fleet-icon name="down"></fleet-icon></div>
        `;
      }
    }
    customElements.define('select-field', SelectField);

    class ReportSettings extends HTMLElement {
      constructor() {
        super();
        this.attachShadow({ mode: 'open' });
        this.shadowRoot.innerHTML = `
          <style>
            :host { display: block; padding-top: 100px; font-size: 24px; }
            .vehicle { margin-top: 54px; --field-gap: 26px; }
            .advanced, .generate { box-sizing: border-box; display: flex; align-items: center; }
            .advanced {
              height: 134px;
              margin-top: 39px;
              padding: 0 47px;
              border: 3px dashed #dedee0;
              border-radius: 26px;
              box-shadow: 0 3px 5px rgba(0, 0, 0, .05);
              font-weight: 500;
            }
            .advanced fleet-icon { color: var(--muted); }
            .advanced fit-text { margin: 0 16px 0 14px; }
            .advanced fleet-icon:last-child { margin-left: auto; color: #4d4c52; }
            .generate {
              justify-content: center;
              gap: 32px;
              height: 72px;
              margin-top: 71px;
              border-radius: 22px;
              background: var(--ink);
              color: #fff;
              font-weight: 500;
              box-shadow: 0 2px 5px rgba(0, 0, 0, .12);
            }
          </style>
          <select-field>
            <fit-text slot="label" w="132">Date Range</fit-text>
            <fit-text slot="note" w="126">Max 31 days</fit-text>
            <fit-text w="67">Today</fit-text>
          </select-field>
          <select-field class="vehicle">
            <fit-text slot="label" w="84">Vehicle</fit-text>
            <fit-text w="174">Select Vehicle...</fit-text>
          </select-field>
          <div class="advanced">
            <fleet-icon name="sliders"></fleet-icon>
            <fit-text w="200">Advanced Options</fit-text>
            <fleet-icon name="help" size="28"></fleet-icon>
            <fleet-icon name="down"></fleet-icon>
          </div>
          <div class="generate"><fleet-icon name="fileText"></fleet-icon><fit-text w="189">Generate Report</fit-text></div>
        `;
      }
    }
    customElements.define('report-settings', ReportSettings);

    class ReportPage extends HTMLElement {
      constructor() {
        super();
        this.attachShadow({ mode: 'open' });
        this.shadowRoot.innerHTML = `
          <style>
            :host {
              box-sizing: border-box;
              display: flex;
              flex-direction: column;
              flex: 1;
              padding: 0 34px 0 49px;
              background:
                radial-gradient(closest-side, rgba(205, 195, 197, .35), transparent) 1030px 1130px / 80px 120px no-repeat,
                radial-gradient(closest-side, rgba(238, 233, 235, .8), transparent) 1000px 740px / 110px 500px no-repeat,
                radial-gradient(closest-side, rgba(238, 235, 237, .8), transparent) 790px 1090px / 580px 180px no-repeat,
                radial-gradient(closest-side, rgba(238, 233, 235, .7), transparent) 980px 1170px / 330px 110px no-repeat,
                #e8eef2;
            }
            .cards { display: grid; grid-template-columns: 978px 976px; justify-content: space-between; }
            footer {
              display: flex;
              gap: 24px;
              align-self: flex-end;
              align-items: center;
              width: 513px;
              height: 28px;
              margin: auto -34px 0 0;
              padding-left: 8px;
              background: linear-gradient(#e8eef2, #ebecee);
              color: #e1e3e6;
              font-family: Roboto, sans-serif;
              font-size: 20px;
            }
            footer i { width: 18px; height: 5px; border: 2px solid #dfe1e3; border-top: 0; }
          </style>
          <report-header></report-header>
          <div class="cards">
            <report-card icon="fileChart" heading="Report Type" title-w="159" sub="Select the type of report to generate" sub-w="407">
              <trail-summary></trail-summary>
              <report-types></report-types>
            </report-card>
            <report-card icon="funnel" heading="Report Settings" title-w="205" sub="Configure report parameters" sub-w="319">
              <report-settings></report-settings>
            </report-card>
          </div>
          <footer>
            <fit-text w="174">Keyboard shortcuts</fit-text>
            <fit-text w="218">Map data ©2026 Google</fit-text>
            <fit-text w="43">2 km</fit-text>
            <i style="margin-left: -16px"></i>
          </footer>
        `;
      }
    }
    customElements.define('report-page', ReportPage);

    class SideRail extends HTMLElement {
      constructor() {
        super();
        this.attachShadow({ mode: 'open' });
        this.shadowRoot.innerHTML = `
          <style>
            :host {
              box-sizing: border-box;
              display: flex;
              flex-direction: column;
              align-items: center;
              width: 111px;
              height: 1768px;
              margin: 16px 17px 0 15px;
              border: 2px solid var(--line);
              border-radius: 24px;
              background: #fcfcfc;
            }
            .top, .bottom { display: flex; align-items: center; justify-content: center; width: 100%; }
            .top { height: 110px; border-bottom: 2px solid var(--line); }
            .top fleet-icon { margin-top: 2px; }
            .crosshair { margin: 16px 0 40px; }
            .bottom { height: 48px; margin-top: auto; border-top: 2px solid var(--line); }
            i { width: 16px; height: 16px; border-radius: 50%; background: var(--green); }
          </style>
          <div class="top"><fleet-icon name="left"></fleet-icon></div>
          <fleet-icon class="crosshair" name="crosshair"></fleet-icon>
          <fleet-icon name="layers"></fleet-icon>
          <div class="bottom"><i></i></div>
        `;
      }
    }
    customElements.define('side-rail', SideRail);

    class FleetApp extends HTMLElement {
      constructor() {
        super();
        this.attachShadow({ mode: 'open' });
        this.shadowRoot.innerHTML = `
          <style>
            :host {
              position: relative;
              display: grid;
              grid-template-columns: 650px 2087px 143px;
              width: 2880px;
              height: 1800px;
              overflow: hidden;
            }
            main { display: flex; flex-direction: column; height: 1800px; }
            /* shadow cast by the drawer parked off the right edge */
            .drawer {
              position: absolute;
              left: 2880px;
              top: 70px;
              width: 200px;
              height: 1800px;
              box-shadow: 0 0 90px 0 rgba(0, 0, 0, .2);
            }
          </style>
          <asset-sidebar></asset-sidebar>
          <main>
            <top-bar></top-bar>
            <report-page></report-page>
          </main>
          <side-rail></side-rail>
          <div class="drawer"></div>
        `;
      }
    }
    customElements.define('fleet-app', FleetApp);

    FitText.all.forEach(label => label.fit());
  </script>

</body>
</html>
